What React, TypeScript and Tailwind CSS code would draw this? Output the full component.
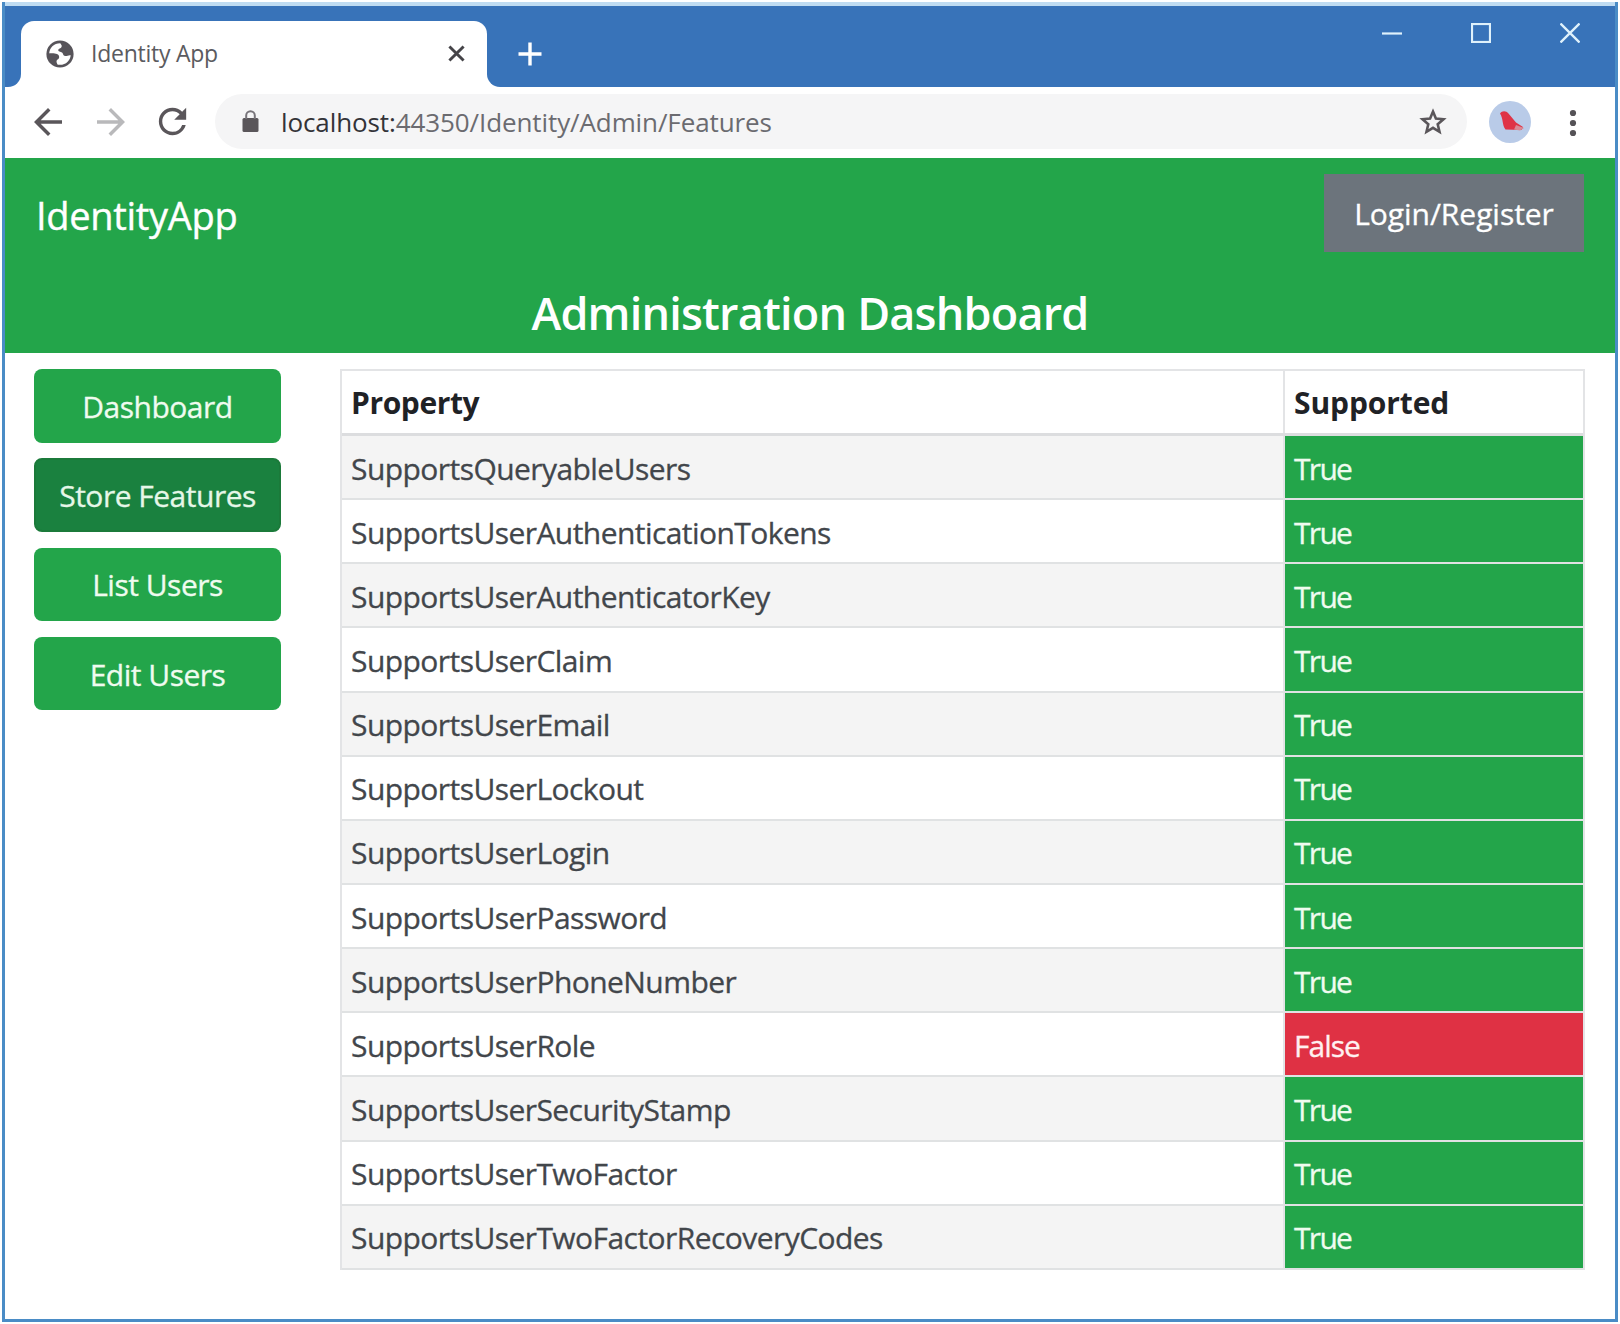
import React from "react";
import { MdRefresh, MdArrowBack, MdArrowForward } from "react-icons/md";

const features: [string, boolean][] = [
  ["SupportsQueryableUsers", true],
  ["SupportsUserAuthenticationTokens", true],
  ["SupportsUserAuthenticatorKey", true],
  ["SupportsUserClaim", true],
  ["SupportsUserEmail", true],
  ["SupportsUserLockout", true],
  ["SupportsUserLogin", true],
  ["SupportsUserPassword", true],
  ["SupportsUserPhoneNumber", true],
  ["SupportsUserRole", false],
  ["SupportsUserSecurityStamp", true],
  ["SupportsUserTwoFactor", true],
  ["SupportsUserTwoFactorRecoveryCodes", true],
];

const navItems = ["Dashboard", "Store Features", "List Users", "Edit Users"];

function Globe() {
  return (
    <svg viewBox="0 0 28 28" className="h-7 w-7 shrink-0" fill="none">
      <circle cx="14" cy="14" r="12.2" stroke="#57545a" strokeWidth="2.8" />
      <path
        d="M14 2 C14.5 4.5 16.5 5 15.5 7 C15 8.5 12 8.5 12.3 10.5 C12.6 12 15.5 11.5 16.5 13 C17.5 14.5 17 15.5 19 16 C21 16.5 22.5 14.5 25.5 15.5 C26.5 9 21 2.5 14 2 Z"
        fill="#57545a"
      />
      <path
        d="M2 13.5 C5 13 9 13 11 14 C13 15 13.5 16.5 13 18 C12.5 19.5 10.5 19.5 10.5 21.5 C10.5 23 11.5 24 12 26 C6 25 2 20 2 13.5 Z"
        fill="#57545a"
      />
    </svg>
  );
}

function TabStrip() {
  return (
    <div className="flex h-[81px] shrink-0 bg-[#3873b9]">
      <div className="flex w-4 items-end bg-white">
        <div className="h-full w-full rounded-br-[13px] bg-[#3873b9]" />
      </div>
      <div className="flex w-[466px] bg-[#3873b9] pt-[15px]">
        <div className="flex h-full w-full items-center rounded-t-[13px] bg-white pr-[22px] pl-[25px]">
          <Globe />
          <span className="ml-[17px] grow pb-[2px] text-[23px] leading-8 tracking-[-0.25px] text-[#5b5b60]">Identity App</span>
          <svg viewBox="0 0 18 18" className="mb-px h-[17px] w-[17px]" stroke="#454448" strokeWidth="3.1">
            <path d="M1.5 1.5 L16.5 16.5 M16.5 1.5 L1.5 16.5" />
          </svg>
        </div>
      </div>
      <div className="flex w-4 bg-white">
        <div className="h-full w-full rounded-bl-[13px] bg-[#3873b9]" />
      </div>
      <div className="flex grow items-start justify-between">
        <svg viewBox="0 0 24 24" className="mt-[36px] ml-[15px] h-6 w-6" stroke="#fff" strokeWidth="3.4">
          <path d="M12 0.5 V23.5 M0.5 12 H23.5" />
        </svg>
        <div className="mt-[17px] mr-[35px] flex gap-[69px]">
          <svg viewBox="0 0 20 20" className="h-5 w-5" stroke="#dff1fb" strokeWidth="2.2">
            <path d="M0 10.500 H20" />
          </svg>
          <svg viewBox="0 0 20 20" className="h-5 w-5" fill="none" stroke="#dff1fb" strokeWidth="2.2">
            <rect x="1" y="1" width="18" height="18" />
          </svg>
          <svg viewBox="0 0 20 20" className="h-5 w-5" stroke="#dff1fb" strokeWidth="2.3">
            <path d="M0.5 0.5 L19.5 19.5 M19.5 0.5 L0.5 19.5" />
          </svg>
        </div>
      </div>
    </div>
  );
}

function Toolbar() {
  return (
    <div className="flex h-[71px] shrink-0 items-center bg-white pb-[2px]">
      <MdArrowBack className="ml-[22px] h-[42px] w-[42px] text-[#5a565a]" />
      <MdArrowForward className="ml-[21px] h-[42px] w-[42px] text-[#b9b9bb]" />
      <MdRefresh className="ml-[20px] h-[41px] w-[41px] text-[#5a565a]" />
      <div className="ml-[22px] flex h-[55px] w-[1252px] items-center rounded-full bg-[#f5f5f6] pl-[27px]">
        <svg viewBox="0 0 17 22" className="mb-[2px] h-[22px] w-[17px]" fill="none">
          <rect x="0.5" y="8" width="16" height="14" rx="1.5" fill="#5a565a" />
          <path d="M4.200 9 V5.500 A4.300 4.300 0 0 1 12.800 5.500 V9" stroke="#77747a" strokeWidth="2" />
        </svg>
        <span className="ml-[22px] grow text-[26px] leading-9 tracking-[-0.1px] text-[#6b6b70]">
          <span className="text-[#333338]">localhost:</span>44350/Identity/Admin/Features
        </span>
        <svg viewBox="0 0 28 28" className="mr-[20px] h-[28px] w-[28px]" fill="none" stroke="#5a565a" strokeWidth="2.6">
          <path d="M14 3.600 L16.900 10.600 L24.500 11.300 L18.700 16.300 L20.500 23.800 L14 19.800 L7.500 23.800 L9.300 16.300 L3.500 11.300 L11.100 10.600 Z" />
        </svg>
      </div>
      <svg viewBox="0 0 42 42" className="ml-[22px] h-[42px] w-[42px]">
        <circle cx="21" cy="21" r="21" fill="#b9cbe8" />
        <path d="M11 12.500 C13 9.500 17 9.500 19.500 12.500 L27 21.500 L34 26 L32.500 29 L16.500 28.500 C13 24 14.500 18 11 12.500 Z" fill="#df3346" />
        <path d="M27 24 L35 27 L31 29.500 L25 28.500 Z" fill="#d98a96" />
      </svg>
      <svg viewBox="0 0 8 28" className="mt-[2px] ml-[38px] h-7 w-2" fill="#555256">
        <circle cx="4" cy="4" r="3.1" />
        <circle cx="4" cy="14" r="3.1" />
        <circle cx="4" cy="24" r="3.1" />
      </svg>
    </div>
  );
}

function PageHeader() {
  return (
    <header className="flex h-[195px] shrink-0 flex-col bg-[#23a54a] text-white">
      <div className="flex items-center justify-between pt-4 pr-[31px] pl-[31px]">
        <span className="pt-[3px] text-[38px] leading-[52px] tracking-[-0.3px] [-webkit-text-stroke:0.4px]">IdentityApp</span>
        <button className="h-[78px] w-[260px] bg-[#6c747c] pt-px text-[30px] leading-[45px] tracking-[-0.05px] [-webkit-text-stroke:0.3px]">Login/Register</button>
      </div>
      <h1 className="mt-[31px] text-center text-[45px] leading-[60px] font-semibold tracking-[-0.8px]">Administration Dashboard</h1>
    </header>
  );
}

export default function App() {
  return (
    <div className="h-[1324px] w-[1620px] bg-white p-[2px] font-['Open_Sans','Noto_Sans',sans-serif]">
      <div className="flex h-[1320px] w-[1616px] flex-col border-x-[3px] border-b-[3px] border-[#4a8cc6] bg-white">
        <div className="h-1 shrink-0 bg-[#bfdcf2]" />
        <TabStrip />
        <Toolbar />
        <PageHeader />
        <div className="flex items-start pt-4 pl-[29px]">
          <nav className="flex w-[247px] flex-col gap-[15.8px]">
            {navItems.map((item) => (
              <button
                key={item}
                className={
                  item === "Store Features"
                    ? "h-[73.5px] rounded-lg border-2 border-[#1b7a3a] bg-[#1a813f] pt-px text-[30px] leading-[45px] tracking-[-0.5px] text-[#e6f7e8] [-webkit-text-stroke:0.3px]"
                    : "h-[73.5px] rounded-lg bg-[#23a54a] pt-px text-[30px] leading-[45px] tracking-[-0.5px] text-[#effbef] [-webkit-text-stroke:0.3px]"
                }
              >
                {item}
              </button>
            ))}
          </nav>
          <div role="table" className="ml-[59px] w-[1245px] border-t-2 border-r-2 border-l-2 border-[#e3e4e6] text-[30px] leading-[45px]">
            <div role="row" className="flex h-[65px] border-b-[3px] border-[#dcdddf] font-bold text-[#1f2226]">
              <div role="columnheader" className="flex w-[943px] items-center border-r-2 border-[#e3e4e6] pt-px pl-[9px] tracking-[-0.4px]">Property</div>
              <div role="columnheader" className="flex items-center pt-px pl-[9px] tracking-[-0.1px]">Supported</div>
            </div>
            {features.map(([name, supported], i) => (
              <div
                role="row"
                key={name}
                className={
                  i % 2 === 0
                    ? "flex h-[64.15px] border-b-2 border-[#e0e2e3] bg-[#f4f4f4]"
                    : "flex h-[64.15px] border-b-2 border-[#e0e2e3] bg-white"
                }
              >
                <div role="cell" className="flex w-[943px] items-center border-r-2 border-[#e3e4e6] pt-[2px] pl-[9px] tracking-[-0.56px] text-[#42464b] [-webkit-text-stroke:0.3px]">{name}</div>
                <div
                  role="cell"
                  className={
                    supported
                      ? "flex grow items-center bg-[#23a54a] pt-[2px] pl-[9px] tracking-[-1.7px] text-[#effbef] [-webkit-text-stroke:0.3px]"
                      : "flex grow items-center bg-[#df3144] pt-[2px] pl-[9px] tracking-[-1px] text-[#fff0f0] [-webkit-text-stroke:0.3px]"
                  }
                >
                  {supported ? "True" : "False"}
                </div>
              </div>
            ))}
          </div>
        </div>
      </div>
    </div>
  );
}
